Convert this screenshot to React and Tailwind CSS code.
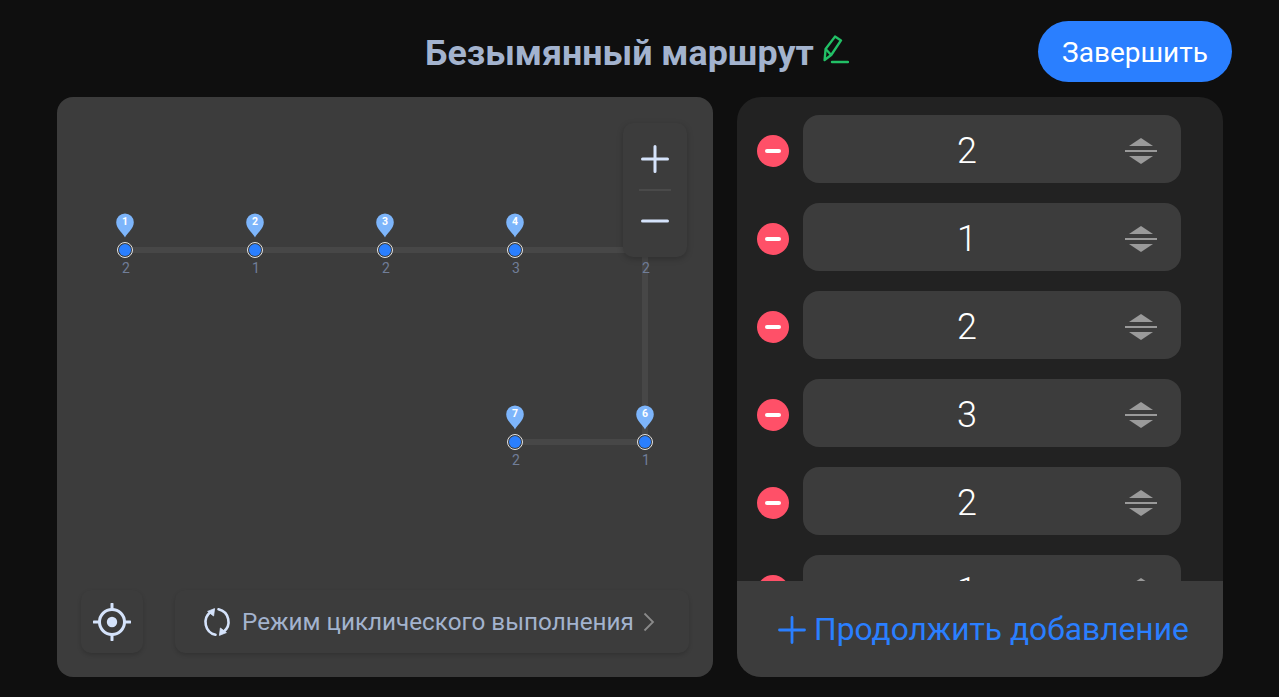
const nodes = [
  { n: 1, count: 2, x: 68, y: 153 },
  { n: 2, count: 1, x: 198, y: 153 },
  { n: 3, count: 2, x: 328, y: 153 },
  { n: 4, count: 3, x: 458, y: 153 },
  { n: 6, count: 1, x: 588, y: 345 },
  { n: 7, count: 2, x: 458, y: 345 },
];

const rows = [2, 1, 2, 3, 2, 1];

const MapNode = ({ node }) => (
  <div className="absolute w-0 h-0" style={{ left: node.x, top: node.y }}>
    <div className="absolute left-[-10px] top-[-37px] w-[20px] h-[25px]">
      <svg width="20" height="25" viewBox="0 0 20 25" className="block">
        <path d="M10 24.5C8.6 20.5 1.2 16 1.2 9.2A8.8 8.8 0 0 1 18.8 9.2C18.8 16 11.4 20.5 10 24.5Z" fill="#7db5fb" />
      </svg>
      <span className="absolute left-0 top-[2px] w-[20px] text-center text-[10.5px] leading-[14px] font-bold text-white">{node.n}</span>
    </div>
    <div className="absolute left-[-8px] top-[-8px] w-[16px] h-[16px] rounded-full bg-[#3c3c3c] border border-[#e4e4e4] flex items-center justify-center">
      <div className="w-[12px] h-[12px] rounded-full bg-[#2a7fff] shrink-0" />
    </div>
    <span className="absolute left-[-9px] top-[11px] w-[20px] text-center text-[14px] leading-[14px] text-[#717e99]">{node.count}</span>
  </div>
);

const PencilIcon = () => (
  <svg width="26" height="29" viewBox="0 0 26 29" fill="none" stroke="#22c066" strokeWidth="2.4" className="block">
    <path d="M1.6 25 L2.6 14 L12 1.6 L18 5.4 L8.2 20 Z" strokeLinejoin="round" />
    <path d="M2.6 14 L8.2 20" />
    <path d="M9 27 H25" strokeLinecap="round" />
  </svg>
);

const SortIcon = () => (
  <svg width="32" height="26" viewBox="0 0 32 26" fill="#9a9a9a" className="block shrink-0">
    <path d="M16 0 L28 8 H4 Z" />
    <rect x="0" y="12" width="32" height="2" />
    <path d="M16 26 L28 18 H4 Z" />
  </svg>
);

const LocateIcon = () => (
  <svg width="38" height="38" viewBox="0 0 38 38" fill="none" stroke="#d5e3fb" strokeWidth="3" className="block">
    <circle cx="19" cy="19" r="12.5" />
    <circle cx="19" cy="19" r="5.2" fill="#d5e3fb" stroke="none" />
    <path d="M19 1V6.5M19 31.5V37M1 19H6.5M31.5 19H37" strokeLinecap="round" />
  </svg>
);

const CycleIcon = () => (
  <svg width="30" height="30" viewBox="0 0 30 30" fill="none" stroke="#d5e3fb" strokeWidth="2.6" className="block">
    <path d="M8.6 5A12.8 12.8 0 0 0 13.5 27.7" strokeLinecap="round" />
    <path d="M21.4 25A12.8 12.8 0 0 0 16.5 2.3" strokeLinecap="round" />
    <path d="M5.6 4.4L12.6 1.6L11.6 9Z" fill="#d5e3fb" stroke="#d5e3fb" strokeWidth="0.8" />
    <path d="M24.4 25.6L17.4 28.4L18.4 21Z" fill="#d5e3fb" stroke="#d5e3fb" strokeWidth="0.8" />
  </svg>
);

const App = () => {
  return (
    <div className="w-[1279px] h-[697px] overflow-hidden bg-[#0f0f0f] font-['Roboto',sans-serif]">
      <header className="h-[97px] flex items-center pl-[425px] pr-[47px]">
        <h1 className="text-[35.8px] leading-[40px] font-bold text-[#a3b3ce] mt-[9px]">Безымянный маршрут</h1>
        <div className="ml-[9px] mt-[1px]">
          <PencilIcon />
        </div>
        <button className="ml-auto mt-[6px] w-[194px] h-[61px] pt-[2px] rounded-full bg-[#2a7fff] text-white text-[28px]">Завершить</button>
      </header>

      <main className="flex pl-[57px] gap-[24px]">
        <section className="relative w-[656px] h-[580px] rounded-[16px] bg-[#3c3c3c] flex flex-col justify-end pb-[24px] pl-[24px] pr-[24px]">
          <div className="absolute left-[68px] top-[150px] w-[520px] h-[6px] bg-[#474747]" />
          <div className="absolute left-[585px] top-[153px] w-[6px] h-[192px] bg-[#474747]" />
          <div className="absolute left-[458px] top-[342px] w-[130px] h-[6px] bg-[#474747]" />
          {nodes.map((node) => (
            <MapNode key={node.n} node={node} />
          ))}
          <span className="absolute left-[579px] top-[164px] w-[20px] text-center text-[14px] leading-[14px] text-[#717e99]">2</span>

          <div className="absolute left-[566px] top-[26px] w-[64px] h-[134px] rounded-[10px] bg-[#3c3c3c] shadow-[0_2px_6px_rgba(0,0,0,0.22)] flex flex-col items-center">
            <svg width="28" height="28" viewBox="0 0 28 28" stroke="#d5e3fb" strokeWidth="3" strokeLinecap="round" className="block mt-[22px]">
              <path d="M14 1.5V26.5M1.5 14H26.5" />
            </svg>
            <div className="w-[32px] h-[2px] bg-[#4a4a4a] mt-[16px]" />
            <svg width="28" height="4" viewBox="0 0 28 4" stroke="#d5e3fb" strokeWidth="3" strokeLinecap="round" className="block mt-[28px]">
              <path d="M1.5 2H26.5" />
            </svg>
          </div>

          <div className="relative flex gap-[32px]">
            <button className="w-[62px] h-[63px] rounded-[10px] bg-[#3c3c3c] shadow-[0_2px_4px_rgba(0,0,0,0.16)] flex items-center justify-center">
              <LocateIcon />
            </button>
            <button className="flex-1 h-[63px] rounded-[10px] bg-[#3c3c3c] shadow-[0_2px_4px_rgba(0,0,0,0.16)] flex items-center pl-[27px]">
              <CycleIcon />
              <span className="ml-[10px] mt-[2px] text-[24.25px] text-[#a3b3ce]">Режим циклического выполнения</span>
              <svg width="12" height="20" viewBox="0 0 12 20" fill="none" stroke="#8a8a8a" strokeWidth="1.8" className="block ml-[9px]">
                <path d="M1.5 1.5L10 10L1.5 18.5" />
              </svg>
            </button>
          </div>
        </section>

        <section className="w-[486px] h-[580px] rounded-[24px] bg-[#222222] overflow-hidden flex flex-col">
          <div className="flex-1 min-h-0 overflow-hidden pt-[18px] flex flex-col gap-[20px]">
            {rows.map((value, i) => (
              <div key={i} className="flex items-center pl-[20px] gap-[14px] shrink-0">
                <button className="w-[32px] h-[32px] mt-[4px] rounded-full bg-[#ff5068] flex items-center justify-center">
                  <span className="block w-[16px] h-[4px] rounded-full bg-white" />
                </button>
                <div className="w-[378px] h-[68px] rounded-[16px] bg-[#3c3c3c] flex items-center pt-[4px] pl-[6px] pr-[24px]">
                  <span className="flex-1 text-center text-[36px] font-light text-white">{value}</span>
                  <SortIcon />
                </div>
              </div>
            ))}
          </div>
          <button className="h-[96px] shrink-0 bg-[#3c3c3c] flex items-center pl-[41px] gap-[8px] pt-[2px] text-[31.75px] text-[#2a7fff]">
            <svg width="28" height="28" viewBox="0 0 28 28" stroke="#2a7fff" strokeWidth="2.8" strokeLinecap="round" className="block">
              <path d="M14 1.5V26.5M1.5 14H26.5" />
            </svg>
            Продолжить добавление
          </button>
        </section>
      </main>
    </div>
  );
};

export default App;
